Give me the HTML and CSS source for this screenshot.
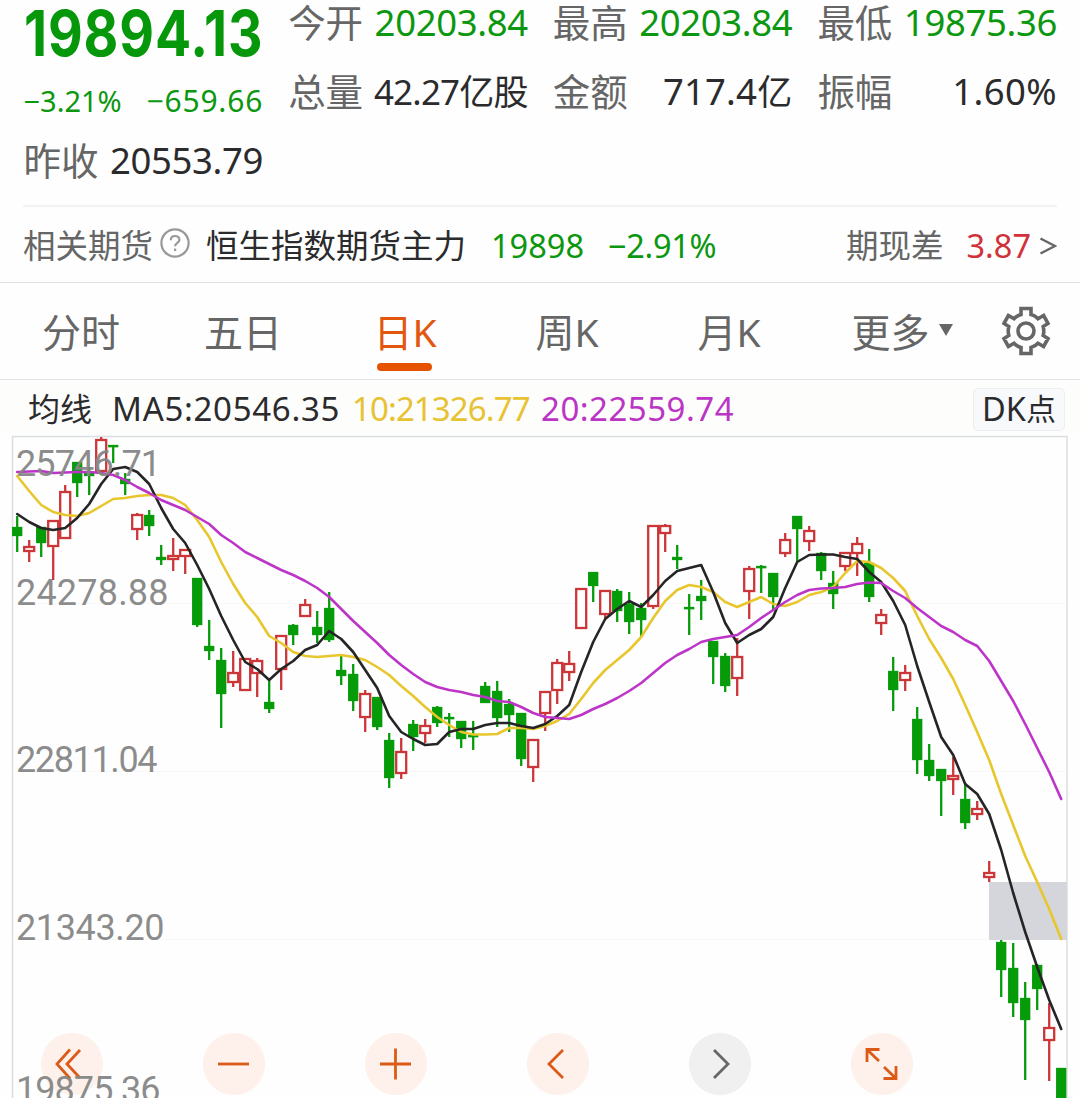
FILE: index.html
```html
<!DOCTYPE html>
<html lang="zh-CN">
<head>
<meta charset="utf-8">
<title>恒生指数</title>
<link rel="stylesheet" href="styles.css">
</head>
<body>
<main class="page">
  <section class="quote">
    <div class="last"><span class="last-price">19894.13</span></div>
    <div class="cell"><span class="label">今开</span><span class="value down">20203.84</span></div>
    <div class="cell"><span class="label">最高</span><span class="value down">20203.84</span></div>
    <div class="cell"><span class="label">最低</span><span class="value down">19875.36</span></div>
    <div class="change down"><span>−3.21%</span><span class="amt">−659.66</span></div>
    <div class="cell"><span class="label">总量</span><span class="value volume">42.27<span class="unit">亿股</span></span></div>
    <div class="cell"><span class="label">金额</span><span class="value turnover">717.4<span class="unit">亿</span></span></div>
    <div class="cell"><span class="label">振幅</span><span class="value range">1.60%</span></div>
    <div class="cell"><span class="label">昨收</span><span class="value">20553.79</span></div>
  </section>

  <section class="futures">
    <span class="muted">相关期货</span>
    <svg class="help" viewBox="0 0 30 30"><circle cx="15" cy="15" r="13.6"/><path d="M10.8 12.2c0-5.6 8.6-5.4 8.6-.4 0 3.1-4.3 3-4.3 6.4"/><path d="M15.1 20.6v2.4"/></svg>
    <span class="name">恒生指数期货主力</span>
    <span class="down fut-price">19898</span>
    <span class="down fut-pct">−2.91%</span>
    <span class="muted basis">期现差</span>
    <span class="up basis-value">3.87</span>
    <svg class="chevron" viewBox="0 0 18 22"><path d="M1.5 3.500 16 11 1.500 18.500"/></svg>
  </section>

  <nav class="tabs">
    <span class="tab">分时</span>
    <span class="tab">五日</span>
    <span class="tab active">日K</span>
    <span class="tab">周K</span>
    <span class="tab">月K</span>
    <span class="tab more">更多<i class="caret"></i></span>
    <svg class="gear" viewBox="-25 -25 50 50"><path d="M-5-22.500H5V-16.500Q9-15.500 12-12.300L17.600-15.500 22-7.600 17.200-4.500Q18.400 0 17.200 4.500L22 7.600 17.600 15.500 12 12.300Q9 15.500 5 16.500V22.500H-5V16.500Q-9 15.500-12 12.300L-17.600 15.500-22 7.600-17.200 4.500Q-18.400 0-17.200-4.500L-22-7.600-17.600-15.500-12-12.300Q-9-15.500-5-16.500Z"/><circle r="8"/></svg>
  </nav>

  <section class="legend">
    <span class="ma-name">均线</span>
    <span class="ma5">MA5:20546.35</span>
    <span class="ma10">10:21326.77</span>
    <span class="ma20">20:22559.74</span>
    <span class="dk">DK<span class="dk-unit">点</span></span>
  </section>

  <section class="chart">
    <div class="controls">
      <span class="ctl"><svg viewBox="-31 -31 62 62"><path d="M-2-14.500-15 0-2 14.500M8-14-5 0 8 14"/></svg></span>
      <span class="ctl"><svg viewBox="-31 -31 62 62"><path d="M-16 0H15"/></svg></span>
      <span class="ctl"><svg viewBox="-31 -31 62 62"><path d="M-16 0H15M-.5-15.500V15.500"/></svg></span>
      <span class="ctl"><svg viewBox="-31 -31 62 62"><path d="M5-14-9 0 5 14"/></svg></span>
      <span class="ctl off"><svg viewBox="-31 -31 62 62"><path d="M-6-14 8 0-6 14"/></svg></span>
      <span class="ctl"><svg viewBox="-31 -31 62 62"><path d="M-15-2V-14.500H-2.500M-14-13.500-3-3M1.500 14.500H14V2M13 13.500 2 3"/></svg></span>
    </div>
    <svg class="plot" viewBox="0 434 1080 664">
      <path class="grid" d="M13 603.500H1067M13 771.500H1067M13 939.500H1067"/>
      <path class="frame" d="M12.500 1098V436.500H1067V1098"/>
      <rect class="gap-zone" x="989" y="882" width="78" height="58"/>
      <g id="candles"></g>
      <g id="averages"></g>
      <g class="axis">
        <text x="16" y="475.500" textLength="145">25746.71</text>
        <text x="16" y="605" textLength="152.500">24278.88</text>
        <text x="16" y="772" textLength="141.500">22811.04</text>
        <text x="16" y="940" textLength="148.500">21343.20</text>
        <text x="16" y="1101.500" textLength="144.500">19875.36</text>
      </g>
    </svg>
  </section>
</main>
<script src="chart.js"></script>
</body>
</html>
```
FILE: styles.css
```css
* { box-sizing: border-box; }
body {
  margin: 0;
  background: #fdfefd;
  color: #2b2b2d;
  font-family: "Noto Sans", "Noto Sans CJK SC", sans-serif;
}
.page { width: 1080px; height: 1098px; overflow: hidden; }
.down { color: #0b970f; }
.up { color: #d2313a; }
.muted { color: #666; }

.quote {
  display: grid;
  grid-template-columns: repeat(4, minmax(0, 1fr));
  grid-template-rows: 69px 69px 67px;
  column-gap: 25px;
  height: 205px;
  margin: 0 23px 0 23.5px;
  line-height: 1;
}
.quote > * { height: 45px; display: flex; align-items: center; white-space: nowrap; }
.cell, .change { justify-content: space-between; }
.label { color: #666; font-size: 37.5px; line-height: 41px; height: 45px; font-family: "Noto Sans CJK SC", sans-serif; }
.value { font-size: 36.5px; line-height: 45px; letter-spacing: -.35px; }
.volume { font-size: 35px; letter-spacing: -.8px; }
.turnover { letter-spacing: .2px; }
.range { letter-spacing: .4px; }
.unit { font-family: "Noto Sans CJK SC", sans-serif; font-size: 35px; line-height: 1; }
.quote .last { height: 66px; }
.last-price {
  color: #06970a;
  font-family: Inter, sans-serif;
  font-size: 63px;
  font-weight: 700;
  letter-spacing: 1px;
  line-height: 66px;
  transform: scaleX(.85);
  transform-origin: 0 50%;
}
.quote .change { height: 64px; font-size: 29px; line-height: 40px; }
.amt { font-size: 30px; letter-spacing: .8px; }

.futures {
  display: flex;
  align-items: center;
  height: 77px;
  margin: 0 23px;
  padding-top: 2px;
  border-top: 2px solid #f3f3f4;
  font-size: 32.5px;
  line-height: 40px;
  white-space: nowrap;
}
.help { width: 30px; height: 30px; margin: -5px 16px 0 7px; fill: none; stroke: #999; stroke-width: 2.2; }
.fut-price { margin-left: 25px; }
.fut-pct { margin-left: 24px; letter-spacing: -.3px; }
.basis { margin-left: auto; }
.basis-value { margin-left: 23px; }
.chevron { width: 18px; height: 22px; margin-left: 8px; fill: none; stroke: #666; stroke-width: 2.5; }

.tabs {
  display: grid;
  grid-template-columns: repeat(5, 162px) 184px 64px;
  align-items: center;
  height: 97px;
  border-top: 1px solid #dfe2e3;
  color: #666;
  font-size: 39px;
  line-height: 50px;
}
.tab { display: flex; justify-content: center; align-items: center; position: relative; height: 96px; padding-top: 1px; }
.active { color: #e2560e; }
.active::after {
  content: "";
  position: absolute;
  left: 53px;
  top: 80px;
  width: 55px;
  height: 8px;
  border-radius: 4px;
  background: #e65300;
}
.caret { margin: -4px 0 0 9px; border: 7px solid transparent; border-top: 12px solid #666; border-bottom: 0; }
.gear { width: 50px; height: 50px; margin-left: 7px; fill: none; stroke: #666; stroke-width: 3.6; }

.legend {
  display: flex;
  align-items: center;
  height: 55px;
  padding: 4px 15px 0 28px;
  border-top: 1px solid #dfe2e3;
  background: #fdfdfc;
  font-size: 33px;
  line-height: 42px;
  white-space: nowrap;
}
.ma-name { width: 84px; font-size: 32px; }
.ma5 { width: 240px; letter-spacing: .7px; }
.ma10 { width: 189px; letter-spacing: -.9px; color: #e7c233; }
.ma20 { letter-spacing: .5px; color: #bb35c5; }
.dk {
  display: flex;
  align-items: center;
  justify-content: center;
  width: 92px;
  height: 43px;
  margin-left: auto;
  border: 1px solid #ebedf0;
  border-radius: 5px;
  background: #f8f9fb;
  font-size: 32.5px;
}
.dk-unit { font-size: 30px; }

.chart { position: relative; height: 664px; }
.plot { display: block; position: relative; width: 1080px; height: 664px; }
.grid { stroke: #f8f8f9; }
.frame { fill: none; stroke: #dcdfe1; stroke-width: 1.5; }
.gap-zone { fill: #d4d6dc; }
.axis { fill: #858585; fill-opacity: .95; font: 36px Roboto, sans-serif; }
.wick, .body { stroke-width: 2.3; }
.rise { stroke: #cc3639; fill: #fff; }
.fall { stroke: #069b09; fill: #069b09; }
.avg { fill: none; stroke-width: 2.6; stroke-linejoin: round; stroke-linecap: round; }
.avg5 { stroke: #252525; }
.avg10 { stroke: #e8c62d; }
.avg20 { stroke: #bd35c8; }
.controls {
  position: absolute;
  left: 41px;
  top: 599px;
  display: flex;
  gap: 100px;
}
.ctl { width: 62px; height: 62px; border-radius: 50%; background: rgba(255, 228, 218, .5); }
.ctl svg { display: block; width: 62px; height: 62px; fill: none; stroke: #dc5a18; stroke-width: 2.8; }
.off { background: rgba(230, 230, 230, .6); }
.ctl.off svg { stroke: #666; }
```
FILE: chart.js
```js
// Each candle: [rising, high, body top, body bottom, low] in plot units.
const candles = [
  [0,516,527,536,552],[1,540,547,551,562],[0,527,527,543,557],[1,520,521,546,580],[1,485,492,538,539],
  [0,462,462,483,497],[0,467,472,476,495],[1,437,440,471,471],[0,445,445,447,463],[0,473,479,484,495],
  [1,513,515,529,540],[0,510,515,526,536],[0,545,557,560,565],[1,538,556,559,571],[1,549,550,556,574],
  [0,578,578,625,627],[0,620,646,651,660],[0,648,660,694,728],[1,651,673,682,687],[1,659,659,690,690],
  [1,658,661,673,697],[0,681,702,709,713],[1,636,636,669,690],[0,624,625,635,645],[1,599,605,616,617],
  [0,611,627,635,643],[0,592,608,640,642],[0,656,670,676,685],[0,664,674,701,711],[1,690,694,717,732],
  [0,697,697,727,730],[0,733,740,778,788],[1,738,752,773,779],[0,720,724,737,751],[1,719,726,733,743],
  [0,706,707,723,727],[0,713,717,717,737],[0,721,721,739,748],[0,721,735,736,750],[0,682,686,703,703],
  [0,681,691,718,727],[0,699,704,715,732],[0,713,713,759,766],[1,740,740,767,782],[1,692,692,713,731],
  [1,659,663,690,704],[1,651,664,672,681],[1,589,589,628,628],[0,572,572,586,602],[1,591,591,614,619],
  [0,589,591,611,622],[0,592,604,622,634],[0,603,608,620,637],[1,526,526,606,609],[1,524,526,533,552],
  [0,545,557,560,569],[0,594,607,607,635],[0,580,596,601,620],[0,641,641,657,684],[0,653,656,686,692],
  [1,638,657,678,696],[1,566,569,591,619],[0,565,566,568,593],[0,573,573,597,610],[1,533,540,553,557],
  [0,516,516,529,562],[1,526,531,541,551],[0,552,553,571,580],[0,571,583,594,609],[1,552,553,566,571],
  [1,537,544,553,576],[0,549,563,597,602],[1,609,615,623,635],[0,657,671,690,711],[1,665,673,680,691],
  [0,707,719,760,774],[0,744,760,776,781],[0,769,769,781,816],[1,757,776,779,795],[0,783,799,823,829],
  [1,801,809,814,820],[1,861,873,877,882],[0,940,942,970,997],[0,943,968,1003,1017],[0,982,998,1020,1080],
  [0,964,965,989,1010],[1,1003,1028,1040,1081],[0,1068,1068,1100,1100]
];
const averages = {
  avg10: [476,491,505,512,515,516,513,506,499,498,496,495,495,498,505,520,537,562,584,603,617,636,643,652,656,657,656,655,657,660,667,675,686,696,707,717,725,732,734.5,734.5,734,728,728,729,726,721,714,699,683,670,660,650,637,618,601,590,585,587,592,602,607,602,597,604,606,602,595,592,587,573,561,562,568,578,591,616,639,658,679,705,732,760,794,825,856,882,909,939],
  avg5: [514,522,528,530,528,518,504,484,469,467,472,484,508,529,543,565,589,616,640,662,669,680,669,661,650,645,631,639,652,670,688,716,732,739,745,744,732,729,729,725,723,723,726,728,724,716,705,672,642,619,609,601,607,595,581,571,568,565,592,623,643,635,629,617,588,562,555,554.5,554.5,557,559,572,582,601,625,666,702,737,755,784,794,814,850,893,932,967,1000,1029],
  avg20: [472,471.5,471,473,472.5,472,472,473,475,480,487,493,500,505,510,517,524,535,543,552,558,564,570,575,581,588,597,609,621,632,643,655,665,674,682,687,690,692,695,697,701,702,707,713,717,718,719,715,709,704,698,691,683,673,663,655,649,642,639,637,635,627,618,610,602,595,590,588.5,588,587,584,582.5,583,591,598,608,617,626,632,640,646,661,681,701,724,748,772,799]
};
const x = i => 17.2 + i * 12;
document.getElementById("candles").innerHTML = candles.map(([up, high, top, bottom, low], i) => {
  const cx = x(i), kind = up ? "rise" : "fall";
  const height = Math.max(bottom - top - (up ? 0 : 2), .2);
  return `<path class="wick ${kind}" d="M${cx} ${high}V${low}"/>` +
    `<rect class="body ${kind}" x="${cx - (up ? 5 : 4)}" y="${top + (up ? 0 : 1)}" width="${up ? 10 : 8}" height="${height}"/>`;
}).join("");
document.getElementById("averages").innerHTML = Object.entries(averages).map(([name, ys]) =>
  `<polyline class="avg ${name}" points="${ys.map((y, i) => `${x(i)},${y}`).join(" ")}"/>`).join("");
```
